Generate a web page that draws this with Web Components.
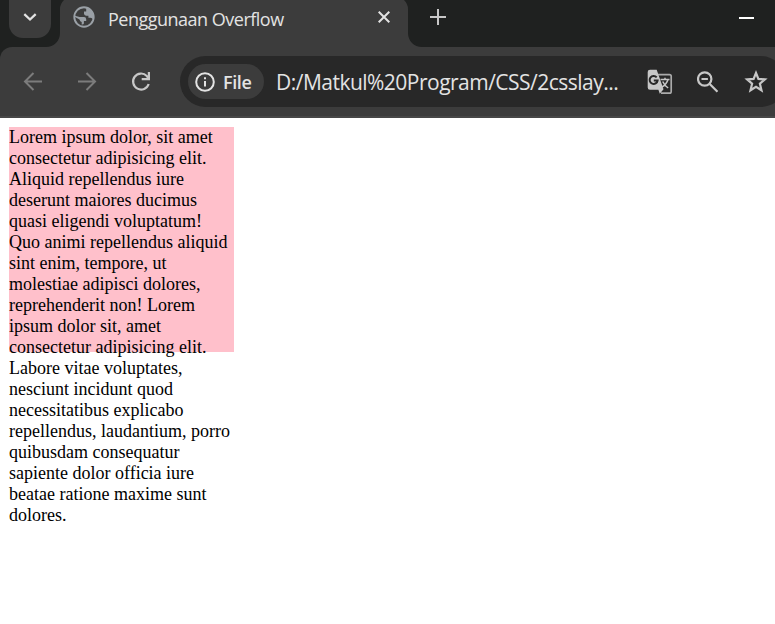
<!DOCTYPE html>
<html lang="id">
<head>
<meta charset="utf-8">
<title>Penggunaan Overflow</title>
<style>
html, body { margin: 0; height: 100%; overflow: hidden; background: #fff; }
</style>
</head>
<body>
<browser-window>
  <tab-strip slot="chrome"><browser-tab>Penggunaan Overflow</browser-tab></tab-strip>
  <tool-bar slot="chrome"><address-bar slot="address" scheme="File">D:/Matkul%20Program/CSS/2csslay...</address-bar></tool-bar>
  <overflow-box>Lorem ipsum dolor, sit amet consectetur adipisicing elit. Aliquid repellendus iure deserunt maiores ducimus quasi eligendi voluptatum! Quo animi repellendus aliquid sint enim, tempore, ut molestiae adipisci dolores, reprehenderit non! Lorem ipsum dolor sit, amet consectetur adipisicing elit. Labore vitae voluptates, nesciunt incidunt quod necessitatibus explicabo repellendus, laudantium, porro quibusdam consequatur sapiente dolor officia iure beatae ratione maxime sunt dolores.</overflow-box>
</browser-window>
<script>
const define = (name, html) => customElements.define(name, class extends HTMLElement {
  constructor() {
    super();
    this.attachShadow({ mode: 'open' }).innerHTML = html;
  }
  connectedCallback() {
    const s = this.shadowRoot.querySelector('[data-scheme]');
    if (s) s.textContent = this.getAttribute('scheme');
  }
});

define('browser-window', `
<style>
:host { display: flex; flex-direction: column; width: 775px; height: 624px; overflow: hidden; background: #fff; }
main { padding: 9px; }
</style>
<slot name="chrome"></slot><main><slot></slot></main>`);

define('tab-strip', `
<style>
:host { display: flex; height: 47px; flex: none; background: #1f2120; color: #e3e3e3; }
.search { width: 42px; height: 38px; margin: 0 9px; border-radius: 0 0 14px 14px; background: #3c3c3c; flex: none; }
.search svg, .new svg { display: block; }
.new { margin: 9px 0 0 22px; }
.min { margin: 17px 21px 0 auto; width: 15px; height: 2px; background: #fff; }
</style>
<div class="search"><svg width="42" height="38" fill="none" stroke="#e3e3e3" stroke-width="2.300"><path d="M15.300 14.200l5.700 5.300 5.700-5.300"/></svg></div>
<slot></slot>
<div class="new"><svg width="16" height="16" stroke="#c7c7c7" stroke-width="2"><path d="M0 8h16M8 0v16"/></svg></div>
<div class="min"></div>`);

define('browser-tab', `
<style>
:host { display: flex; position: relative; width: 348px; height: 47px; flex: none; box-sizing: border-box; padding: 0 16px 0 13px; color: #e3e3e3; font: 18px/25px "Open Sans", "Noto Sans", sans-serif; }
.shape { position: absolute; left: -14px; top: 0; }
.globe, .title, .close { position: relative; }
.globe { margin-top: 6px; width: 22px; height: 22px; flex: none; }
.title { margin: 7px 0 0 13px; white-space: nowrap; letter-spacing: -0.5px; }
.close { margin: 11px 2px 0 auto; }
svg { display: block; }
</style>
<svg class="shape" width="376" height="47" fill="#3c3c3c"><path d="M0 47C8 47 14 41 14 33V9Q14 4 18 0H358Q362 4 362 9V33C362 41 368 47 376 47Z"/></svg>
<svg class="globe" viewBox="0 0 22 22"><circle cx="11" cy="11" r="9.700" fill="none" stroke="#9aa0a6" stroke-width="1.900"/><path fill="#9aa0a6" d="M2 9.800L6.600 11H11Q13.200 11 13.200 13.200V14.900H10.900V17.500Q10.500 18.800 8.700 18.500V16Q7 15.500 6.500 13.500L2 11ZM13.200 1.800Q20.600 4 20.800 11L19.700 13Q18.500 11.800 17.200 11.800H15.400V9.700H13.300Q11.600 9.500 11 8V5.500H13.200Z"/></svg>
<span class="title"><slot></slot></span>
<svg class="close" width="12" height="12" stroke="#e3e3e3" stroke-width="2"><path d="M.7.7l10.600 10.600M11.300.7L.7 11.300"/></svg>`);

define('tool-bar', `
<style>
:host { display: block; height: 71px; flex: none; background: #1f2120; }
.bar { height: 71px; box-sizing: border-box; display: flex; padding-top: 9px; background: #3c3c3c; border-radius: 12px 0 0 0; border-bottom: 2px solid #474747; overflow: hidden; }
nav { display: flex; width: 180px; flex: none; }
svg { display: block; }
</style>
<div class="bar"><nav><svg width="180" height="51" fill="none" stroke="#7c7c7c" stroke-width="2">
<path d="M42 25.500H25.200M33.500 17l-8.500 8.500 8.500 8.500M78 25.500H94.800M86.500 17l8.500 8.500-8.500 8.500"/>
<path stroke="#c7c7c7" stroke-width="2.200" d="M148.700 28A8 8 0 1 1 146.800 19.900L149 22.300"/>
<path fill="#c7c7c7" stroke="none" d="M150 16V24.300H141.700V22.100H146.200L147.800 20.500V16Z"/></svg></nav>
<slot name="address"></slot></div>`);

define('address-bar', `
<style>
:host { display: flex; align-items: center; box-sizing: border-box; width: 606px; height: 51px; flex: none; padding-left: 8px; background: #282828; border-radius: 25.500px; color: #e3e3e3; font: 21px/30px "Open Sans", "Noto Sans", sans-serif; }
.chip { display: flex; align-items: center; width: 76px; height: 35px; border-radius: 17.500px; background: #3c3c3c; box-sizing: border-box; padding-left: 7px; flex: none; }
.chip b { font-size: 18px; font-weight: 600; line-height: 26px; margin-left: 8px; letter-spacing: -0.4px; }
.url { width: 345px; margin-left: 12px; flex: none; white-space: nowrap; letter-spacing: -0.520px; }
svg { display: block; flex: none; }
.tr { margin-left: 26px; } .zoom { margin-left: 24px; } .star { margin-left: 25px; }
</style>
<div class="chip"><svg width="20" height="20" fill="none" stroke="#e3e3e3" stroke-width="2"><circle cx="10" cy="10" r="8.800"/><path d="M10 9v5.500M10 5.300v2"/></svg><b data-scheme></b></div>
<span class="url"><slot></slot></span>
<svg class="tr" width="26" height="26" viewBox="0 0 26 26">
<path fill="none" stroke="#aaa" stroke-width="1.700" d="M11 5.600H22.500Q24.200 5.600 24.200 7.300V22.500Q24.200 24.200 22.500 24.200H14"/>
<path fill="#c7c7c7" d="M3 .7H9.700L16.500 20.300 12.800 24.800 11.400 20.700H3Q.7 20.700.7 18.400V3Q.7.7 3 .7Z"/>
<path fill="none" stroke="#282828" stroke-width="2" d="M9.700 8.400A4 4 0 1 0 10.600 11.500H6.800"/>
<path fill="none" stroke="#c7c7c7" stroke-width="1.500" d="M13.500 10.500H22.500M18 8.700V10.500M21 10.500Q19.500 15.500 15 18M15.700 12.500Q17.500 16.500 21.200 19"/></svg>
<svg class="zoom" width="22" height="22" fill="none" stroke="#c7c7c7" stroke-width="2.200"><circle cx="7.700" cy="8" r="6.700"/><path d="M4.500 8h6.400M12.500 12.800l8 8"/></svg>
<svg class="star" width="24" height="24" fill="none" stroke="#c7c7c7" stroke-width="2.200"><path d="M12 3L14.400 8.900 20.900 9.400 15.900 13.700 17.500 20.300 12 16.900 6.500 20.300 8.100 13.700 3.100 9.400 9.600 8.900Z"/></svg>`);

define('overflow-box', `
<style>
:host { display: block; width: 225px; height: 225px; background: pink; color: #000; font: 18px/21px "Liberation Serif", "Times New Roman", serif; }
</style><slot></slot>`);
</script>
</body>
</html>
